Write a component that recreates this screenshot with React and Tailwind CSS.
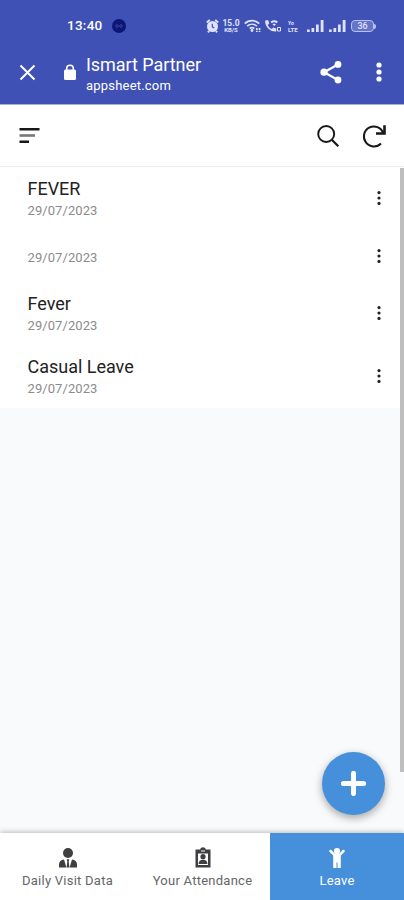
import React from 'react';

const LEAVES = [
  { id: 1, title: 'FEVER',        date: '29/07/2023' },
  { id: 2, title: '',             date: '29/07/2023' },
  { id: 3, title: 'Fever',        date: '29/07/2023' },
  { id: 4, title: 'Casual Leave', date: '29/07/2023' },
];

const TABS = [
  { key: 'visits',     label: 'Daily Visit Data', Icon: VisitIcon },
  { key: 'attendance', label: 'Your Attendance',  Icon: BadgeIcon },
  { key: 'leave',      label: 'Leave',            Icon: ChildIcon },
];

function VisitIcon() {
  return (
    <svg width="20" height="22" viewBox="0 0 20 22" fill="currentColor">
      <circle cx="10" cy="6" r="5" />
      <path d="M1 20.500v-3.200c0-3 2-4.600 5-4.900l2.400 8.100zM19 20.500v-3.200c0-3-2-4.600-5-4.900l-2.400 8.100z" />
      <path d="M8.700 12.300h2.600l-.6 2.200.7 6H8.600l.7-6z" />
    </svg>
  );
}

function BadgeIcon() {
  return (
    <svg width="20" height="22" viewBox="0 0 20 22" fill="currentColor">
      <path fillRule="evenodd" d="M2.500 2.600h4.700C7.500 1 8.600.3 10 .3s2.500.7 2.800 2.300h4.700v18h-15zM5 6.400v11.600h10V6.400z" />
      <circle cx="10" cy="9.700" r="2.600" />
      <path d="M5.600 17c0-3 1.800-4.200 4.400-4.200s4.400 1.200 4.400 4.200z" />
      <path d="M8 3.500h4v1H8z" fill="#fff" />
    </svg>
  );
}

function ChildIcon() {
  return (
    <svg width="20" height="22" viewBox="0 0 20 22" fill="currentColor">
      <circle cx="10" cy="4" r="3.100" />
      <path d="M3.500 4 7.300 7.800h5.400L16.500 4" fill="none" stroke="currentColor" strokeWidth="2.500" strokeLinecap="round" />
      <path d="M6.200 7.200h7.600V21h-3.300v-5.500h-1V21H6.200z" />
    </svg>
  );
}

function Dots({ className, r = 1.6, gap = 5.4 }) {
  return (
    <svg width="8" height="20" viewBox="0 0 8 20" fill="currentColor" className={className}>
      <circle cx="4" cy={10 - gap} r={r} />
      <circle cx="4" cy="10" r={r} />
      <circle cx="4" cy={10 + gap} r={r} />
    </svg>
  );
}

function Signal() {
  return (
    <svg width="17" height="12" viewBox="0 0 17 12" fill="currentColor">
      <path d="M0 9.500h2.700V12H0zM4.500 8h2.700v4H4.500zM9 4.500h2.700V12H9zM13.700 0h2.800v12h-2.800z" />
    </svg>
  );
}

function StatusBar() {
  return (
    <div className="flex h-[52px] items-center pl-[67px] pr-[28px] text-[#dfe3ff]">
      <span className="text-[13.500px] font-medium leading-none tracking-[0.250px] text-white">13:40</span>
      <span className="ml-[9px] flex h-[14px] w-[14px] items-center justify-center rounded-full bg-[#0c1678]">
        <svg width="8" height="4" viewBox="0 0 8 4" fill="none" stroke="#37439d">
          <circle cx="2" cy="2" r="1.300" />
          <circle cx="6" cy="2" r="1.300" />
        </svg>
      </span>

      <div className="ml-auto flex items-center">
        {/* Alarm */}
        <svg width="13" height="14" viewBox="0 0 13 14">
          <path d="m.8 3.500 3-2.500M12.200 3.500 9.200 1M3 12l-1 1.300M10 12l1 1.300" stroke="currentColor" strokeWidth="2" />
          <circle cx="6.500" cy="7.500" r="5.500" fill="currentColor" />
          <path d="M6.300 4.800v3l2 1.200" fill="none" stroke="#3f51b5" strokeWidth="1.200" />
        </svg>
        <span className="ml-[3px] flex w-[18px] flex-col items-center whitespace-nowrap font-bold">
          <span className="text-[8.500px] leading-[8px]">15.0</span>
          <span className="text-[6px] leading-[6px]">KB/S</span>
        </span>
        {/* Wifi */}
        <svg className="ml-[4px]" width="17" height="14" viewBox="0 0 17 14" fill="none" stroke="currentColor" strokeWidth="1.700">
          <path d="M.8 4.600c4-4 10.400-4 14.400 0M3.200 7.200c2.800-2.600 6.800-2.600 9.600 0M5.700 9.500c1.400-1.200 3.200-1.200 4.600 0" />
          <circle cx="8" cy="11.500" r="1.400" fill="currentColor" stroke="none" />
          <path d="M12.800 9v4M15.500 9v4" strokeDasharray="2 .8" />
        </svg>
        {/* Wifi call */}
        <svg className="ml-[3px]" width="18" height="14" viewBox="0 0 18 14" fill="currentColor">
          <path d="M1.200 1.500 4 1l1.300 3.500-1.600 1.400c.9 1.900 2.200 3.200 4.100 4.100l1.500-1.600 3.200 1.400-.4 2.700C6.200 13 .6 7.600 1.200 1.500z" />
          <path d="M6.500 2.600c2.400-1.800 5-1.800 7.400 0l-1.200 1.600c-1.700-1.200-3.300-1.200-5 0zM8.500 5.200c1-.6 2.400-.6 3.400 0L10.200 7z" />
          <path d="M13.500 8.500h3V12h-3z" fill="none" stroke="currentColor" />
        </svg>
        <span className="ml-[6px] flex w-[15px] flex-col">
          <span className="text-[5px] font-bold leading-[6px]">Yo</span>
          <span className="text-[6px] font-bold leading-[7px]">LTE</span>
        </span>
        <span className="ml-[4px]"><Signal /></span>
        <span className="ml-[5px]"><Signal /></span>
        {/* Battery */}
        <span className="ml-[5px] flex items-center">
          <span className="flex h-[12px] w-[23px] items-center justify-center rounded-[4px] border border-[#b9c2f3] bg-[#6574c7] text-[9px] font-medium leading-none">36</span>
          <span className="h-[5px] w-[2px] rounded-r bg-[#b9c2f3]" />
        </span>
      </div>
    </div>
  );
}

function BrowserBar() {
  return (
    <div className="flex h-[52px] items-start text-white">
      <svg className="ml-[19px] mt-[12px]" width="17" height="17" viewBox="0 0 17 17" fill="none" stroke="currentColor" strokeWidth="2">
        <path d="m1.500 1.500 14 14M15.500 1.500l-14 14" />
      </svg>
      <svg className="ml-[27px] mt-[12px]" width="14" height="17" viewBox="0 0 14 17">
        <path d="M3.700 7V4.500a3.300 3.300 0 0 1 6.600 0V7" fill="none" stroke="currentColor" strokeWidth="1.600" />
        <rect x="1" y="5.500" width="12" height="10.500" rx="1.500" fill="currentColor" />
      </svg>
      <div className="ml-[9px] flex flex-col">
        <span className="mt-[2px] text-[18px] leading-[21px] tracking-[-0.050px]">Ismart Partner</span>
        <span className="mt-[3px] text-[13px] leading-[15px] tracking-[0.200px]">appsheet.com</span>
      </div>
      <svg className="ml-auto mt-[8px]" width="24" height="24" viewBox="0 0 24 24" fill="currentColor">
        <path d="M19 4.500 5 12.200l14 7.800" fill="none" stroke="currentColor" strokeWidth="2.200" />
        <circle cx="19" cy="4.400" r="3.400" />
        <circle cx="5" cy="12.200" r="3.600" />
        <circle cx="19" cy="20" r="3.400" />
      </svg>
      <Dots className="ml-[32px] mr-[21px] mt-[10px]" r={2.6} gap={7} />
    </div>
  );
}

function Toolbar() {
  return (
    <div className="flex h-[63px] shrink-0 items-center border-b-2 border-[#ececee] bg-white pl-[19px] pr-[17px] text-[#171717]">
      <svg width="21" height="16" viewBox="0 0 21 16">
        <path d="M.5 0h20v2.400H.5zM.5 12.600H10V15H.5z" fill="currentColor" />
        <path d="M.5 6.200H16v2.600H.5z" fill="#777" />
      </svg>
      <svg className="ml-auto" width="24" height="24" viewBox="0 0 24 24" fill="none" stroke="currentColor" strokeWidth="1.900">
        <circle cx="10.200" cy="10" r="8" />
        <path d="m15.800 15.800 6.500 6.500" strokeWidth="2.200" />
      </svg>
      <svg className="ml-[21px]" width="26" height="24" viewBox="0 0 26 24" fill="none" stroke="currentColor" strokeWidth="2">
        <path d="M22.300 9A10 10 0 1 0 20 19.500" />
        <path d="M23.500 1.200V9.500H15" strokeWidth="2.600" />
      </svg>
    </div>
  );
}

function LeaveRow({ title, date }) {
  return (
    <div className={`flex items-center bg-white pl-[27.500px] pr-[21px] ${title ? 'h-[63px]' : 'h-[52px]'}`}>
      <div className="flex flex-1 flex-col">
        {title && <span className="mb-[4px] text-[18px] leading-[21px] tracking-[-0.020px] text-[#222]">{title}</span>}
        <span className={`text-[13px] leading-[16px] tracking-[0.080px] text-[#8b8b8b] ${title ? '' : 'mt-[3px]'}`}>{date}</span>
      </div>
      <Dots className="mb-px text-[#222]" />
    </div>
  );
}

export default function App() {
  const active = 'leave';

  return (
    <div className="relative flex h-[900px] w-[404px] flex-col overflow-hidden bg-[#f8fafc] font-['Roboto',sans-serif]">
      <header className="h-[105px] shrink-0 border-b border-[#a8afe0] bg-[#3f51b5]">
        <StatusBar />
        <BrowserBar />
      </header>

      <Toolbar />

      <main className="flex min-h-0 flex-1 flex-col">
        <div className="-mt-px">
          {LEAVES.map((leave) => (
            <LeaveRow key={leave.id} title={leave.title} date={leave.date} />
          ))}
        </div>
      </main>

      {/* Scrollbar */}
      <div className="absolute right-0 top-[168px] h-[604px] w-[4px] bg-[#bebebe]" />

      {/* Add button */}
      <button className="absolute bottom-[85px] right-[19.500px] flex h-[63px] w-[63px] items-center justify-center rounded-full bg-[#458fdb] text-white shadow-[0_3px_8px_rgba(0,0,0,0.350)]">
        <svg width="25" height="25" viewBox="0 0 24 24" fill="none" stroke="currentColor" strokeWidth="4.800" strokeLinecap="round">
          <path d="M12 2.300v19.400M2.300 12h19.400" />
        </svg>
      </button>

      <nav className="grid h-[67px] shrink-0 grid-cols-[135px_135px_134px] bg-white shadow-[0_-1px_5px_rgba(0,0,0,0.250)]">
        {TABS.map(({ key, label, Icon }) => (
          <div
            key={key}
            className={`flex flex-col items-center pt-[14px] ${key === active ? 'bg-[#458fdb] text-white' : 'text-[#3f3f41]'}`}
          >
            <Icon />
            <span className={`mt-[4px] whitespace-nowrap text-[13px] leading-[16px] tracking-[0.250px] ${key === active ? '' : 'text-[#666]'}`}>
              {label}
            </span>
          </div>
        ))}
      </nav>
    </div>
  );
}
